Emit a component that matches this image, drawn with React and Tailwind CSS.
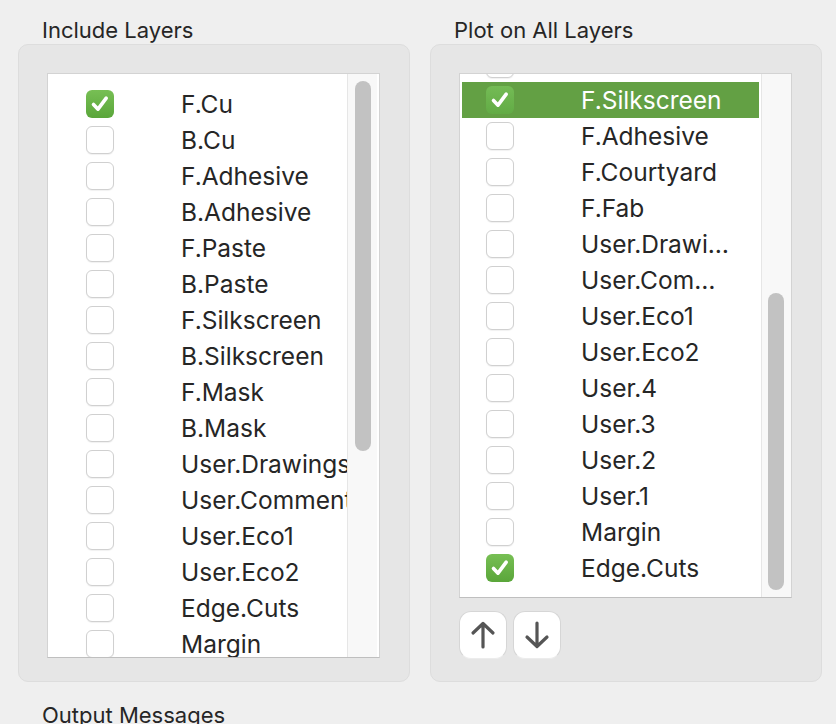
import React from "react";

const leftRows = [
  ["F.Cu", true],
  ["B.Cu", false],
  ["F.Adhesive", false],
  ["B.Adhesive", false],
  ["F.Paste", false],
  ["B.Paste", false],
  ["F.Silkscreen", false],
  ["B.Silkscreen", false],
  ["F.Mask", false],
  ["B.Mask", false],
  ["User.Drawings", false],
  ["User.Comments", false],
  ["User.Eco1", false],
  ["User.Eco2", false],
  ["Edge.Cuts", false],
  ["Margin", false],
];

const rightRows = [
  ["B.Silkscreen", false, false],
  ["F.Silkscreen", true, true],
  ["F.Adhesive", false, false],
  ["F.Courtyard", false, false],
  ["F.Fab", false, false],
  ["User.Drawings", false, false],
  ["User.Comments", false, false],
  ["User.Eco1", false, false],
  ["User.Eco2", false, false],
  ["User.4", false, false],
  ["User.3", false, false],
  ["User.2", false, false],
  ["User.1", false, false],
  ["Margin", false, false],
  ["Edge.Cuts", true, false],
];

function Check({ checked, onDark }) {
  if (checked) {
    return (
      <div
        className={
          "w-[28px] h-[28px] rounded-[6px] flex items-center justify-center shrink-0 " +
          (onDark
            ? "bg-gradient-to-b from-[#74bb55] to-[#62ab45]"
            : "bg-gradient-to-b from-[#77bf54] to-[#5aa63a]")
        }
      >
        <svg width="22" height="22" viewBox="0 0 22 22">
          <path
            d="M4.5 11.5 L9 16.2 L17.2 5.2"
            fill="none"
            stroke="#ffffff"
            strokeWidth="3.6"
            strokeLinecap="round"
            strokeLinejoin="round"
          />
        </svg>
      </div>
    );
  }
  return (
    <div className="w-[28px] h-[28px] rounded-[6px] bg-white border border-[#d0d0d0] shadow-[0_1px_1px_rgba(0,0,0,0.06)] shrink-0" />
  );
}

function Arrow({ up }) {
  return (
    <svg width="28" height="30" viewBox="0 0 28 30">
      {up ? (
        <path
          d="M14 27 L14 4 M4 13 L14 3.5 L24 13"
          fill="none"
          stroke="#555555"
          strokeWidth="3.2"
          strokeLinecap="round"
          strokeLinejoin="round"
        />
      ) : (
        <path
          d="M14 3 L14 26 M4 17 L14 26.5 L24 17"
          fill="none"
          stroke="#555555"
          strokeWidth="3.2"
          strokeLinecap="round"
          strokeLinejoin="round"
        />
      )}
    </svg>
  );
}

export default function App() {
  return (
    <div
      className="w-[836px] h-[724px] bg-[#efefef] overflow-hidden text-[#262626]"
      style={{ fontFamily: "Inter, 'Noto Sans', sans-serif" }}
    >
      <div className="flex pl-[18px] gap-[20px]">
        {/* Left column */}
        <div className="w-[392px]">
          <div className="pt-[17px] h-[44px] pl-[24px] text-[22px] leading-[26px]">
            Include Layers
          </div>
          <div className="h-[638px] bg-[#e6e6e6] border border-[#dddddd] rounded-[10px] pl-[28px] pt-[28px]">
            <div className="w-[333px] h-[585px] border border-[#d3d3d3] border-b-[#bfbfbf] bg-white flex">
              <div className="w-[299px] overflow-hidden pt-[12px] pl-[2px]">
                {leftRows.map(([name, checked]) => (
                  <div key={name} className="h-[36px] flex items-center pl-[36px]">
                    <Check checked={checked} />
                    <span className="ml-[67px] text-[24.5px] whitespace-nowrap">{name}</span>
                  </div>
                ))}
              </div>
              <div className="w-[30px] bg-[#f8f8f8] border-l border-[#e6e6e6] pl-[7px] pt-[7px]">
                <div className="w-[16px] h-[370px] rounded-full bg-[#c2c2c2]" />
              </div>
            </div>
          </div>
        </div>

        {/* Right column */}
        <div className="w-[392px]">
          <div className="pt-[17px] h-[44px] pl-[24px] text-[22px] leading-[26px]">
            Plot on All Layers
          </div>
          <div className="h-[638px] bg-[#e6e6e6] border border-[#dddddd] rounded-[10px] pl-[28px] pt-[28px]">
            <div className="w-[333px] h-[525px] border border-[#d3d3d3] border-b-[#bfbfbf] bg-white flex">
              <div className="w-[301px] overflow-hidden px-[2px]">
                <div className="mt-[-28px]">
                  {rightRows.map(([name, checked, sel]) => (
                    <div
                      key={name}
                      className={
                        "h-[36px] flex items-center pl-[24px] " +
                        (sel ? "bg-[#63a044] text-white" : "")
                      }
                    >
                      <Check checked={checked} onDark={sel} />
                      <span className="ml-[67px] text-[24.5px] whitespace-nowrap overflow-hidden text-ellipsis w-[154px]">
                        {name}
                      </span>
                    </div>
                  ))}
                </div>
              </div>
              <div className="w-[30px] bg-[#f8f8f8] border-l border-[#e6e6e6] pl-[6px] pt-[219px]">
                <div className="w-[16px] h-[297px] rounded-full bg-[#c2c2c2]" />
              </div>
            </div>
            <div className="flex gap-[6px] mt-[13px]">
              <button className="w-[48px] h-[48px] bg-white border border-[#d6d6d6] border-b-[#ececec] rounded-[12px] flex items-center justify-center">
                <Arrow up />
              </button>
              <button className="w-[48px] h-[48px] bg-white border border-[#d6d6d6] border-b-[#ececec] rounded-[12px] flex items-center justify-center">
                <Arrow />
              </button>
            </div>
          </div>
        </div>
      </div>
      <div className="pl-[42px] mt-[20px] text-[22px] leading-[26px]">Output Messages</div>
    </div>
  );
}
